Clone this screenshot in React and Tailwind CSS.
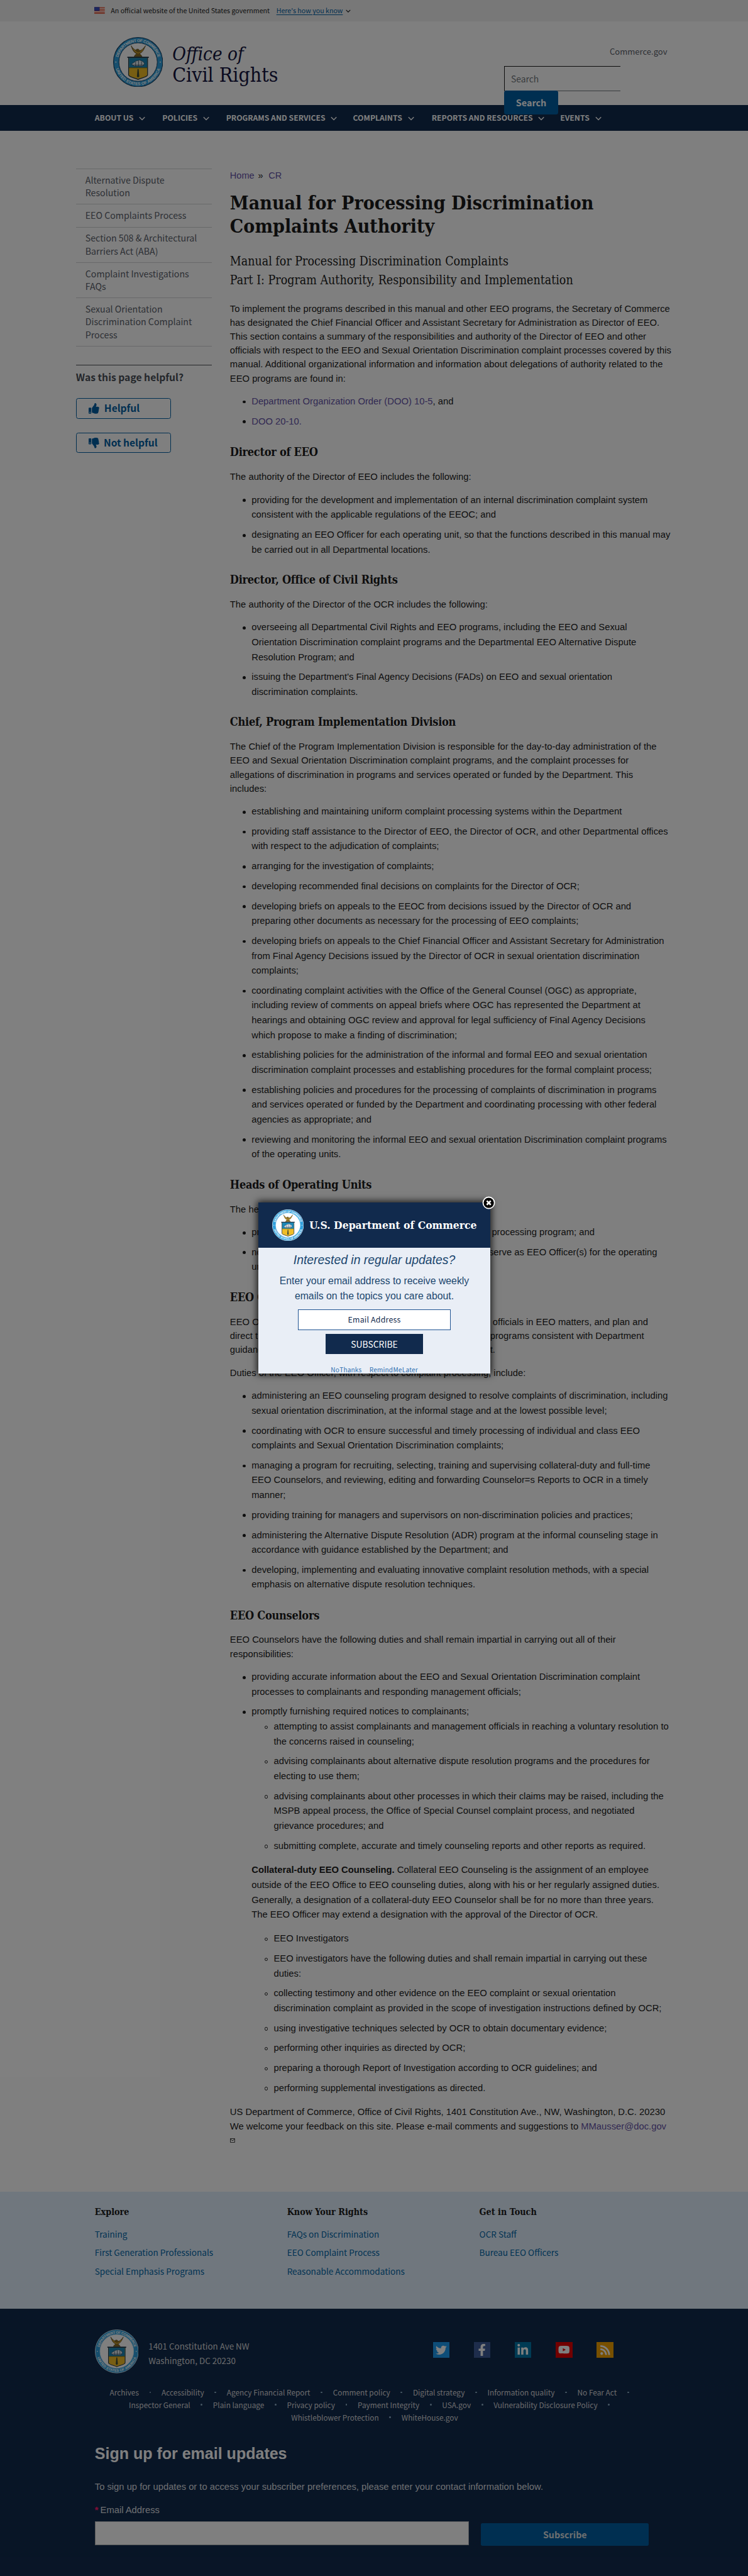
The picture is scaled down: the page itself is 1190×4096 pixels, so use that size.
import React from "react";
import { FaThumbsUp, FaThumbsDown, FaTwitter, FaFacebookF, FaLinkedinIn, FaYoutube, FaRss } from "react-icons/fa";

const MENU = [
  ["About us", "w-[122px]"],
  ["Policies", "w-[115px]"],
  ["Programs and services", "w-[229px]"],
  ["Complaints", "w-[142px]"],
  ["Reports and resources", "w-[232px]"],
  ["Events", "w-[100px]"],
];

const SIDE_LINKS = [
  "Alternative Dispute\nResolution",
  "EEO Complaints Process",
  "Section 508 & Architectural\nBarriers Act (ABA)",
  "Complaint Investigations\nFAQs",
  "Sexual Orientation\nDiscrimination Complaint\nProcess",
];

const FOOTER_COLUMNS = [
  ["Explore", ["Training", "First Generation Professionals", "Special Emphasis Programs"]],
  ["Know Your Rights", ["FAQs on Discrimination", "EEO Complaint Process", "Reasonable Accommodations"]],
  ["Get in Touch", ["OCR Staff", "Bureau EEO Officers"]],
];

const POLICY_ROWS = [
  ["Archives", "Accessibility", "Agency Financial Report", "Comment policy", "Digital strategy", "Information quality", "No Fear Act"],
  ["Inspector General", "Plain language", "Privacy policy", "Payment Integrity", "USA.gov", "Vulnerability Disclosure Policy"],
  ["Whistleblower Protection", "WhiteHouse.gov"],
];

const SOCIAL = [
  [FaTwitter, "bg-[#1c9bf0]", "text-[20px]"],
  [FaFacebookF, "bg-[#3c5a99]", "text-[22px]"],
  [FaLinkedinIn, "bg-[#0077a8]", "text-[22px]"],
  [FaYoutube, "bg-[#e50000]", "text-[21px]"],
  [FaRss, "bg-[#f0a000]", "text-[20px]"],
];

function Seal({ id, className, rim = "#123a5c" }) {
  return (
    <svg viewBox="0 0 100 100" className={className}>
      <defs>
        <path id={`${id}-top`} d="M9.5 50 A40.5 40.5 0 0 1 90.5 50" />
        <path id={`${id}-bottom`} d="M3.5 50 A46.5 46.5 0 0 0 96.5 50" />
      </defs>
      <circle cx="50" cy="50" r="49.3" fill="#2f9fdc" stroke={rim} strokeWidth="1.4" />
      <circle cx="50" cy="50" r="38.5" fill="#fff" stroke={rim} strokeWidth="1.2" />
      <g fill="#fff" fontFamily="'Liberation Sans', sans-serif" fontWeight="700" fontSize="8">
        <text>
          <textPath href={`#${id}-top`} startOffset="50%" textAnchor="middle" textLength="108">DEPARTMENT OF COMMERCE</textPath>
        </text>
        <text>
          <textPath href={`#${id}-bottom`} startOffset="50%" textAnchor="middle" textLength="118">UNITED STATES OF AMERICA</textPath>
        </text>
      </g>
      <circle cx="5.5" cy="50" r="1.2" fill="#fff" />
      <circle cx="94.5" cy="50" r="1.2" fill="#fff" />
      <path d="M36 17 C39 27 42 31 47 33 L44 36 L42 39 L58 39 L56 36 L53 33 C58 31 61 27 65 17 C60 24 56 27 53 27 C52 24 49 23 46 25 L48 27 C43 26 39 22 36 17Z" fill="#8a6d22" stroke="#4e3d13" strokeWidth=".8" />
      <path d="M41 24 C44 30 47 31 50 32 C54 31 58 28 60 24" fill="none" stroke="#d9aa35" strokeWidth="1.6" />
      <path d="M31 41 H69 V76 C69 80 56 82 50 85 C44 82 31 80 31 76Z" fill="#f0bd27" stroke="#263848" strokeWidth="1.6" />
      <path d="M31.8 41.8 H68.2 V61 H31.8Z" fill="#1a86b6" />
      <path d="M28.5 40.5 H71.5" stroke="#1c3245" strokeWidth="2.4" />
      <path d="M37 54 L46 48 L53 46 L60 49 L63 53 L59 58 H42Z" fill="#dfe8ee" stroke="#243a4c" strokeWidth=".8" />
      <path d="M40 56 H61 M45 50 V58 M51 47 V58 M57 49 V57" stroke="#31485a" strokeWidth="1" />
      <path d="M31.5 61.5 H68.5" stroke="#4a5a34" strokeWidth="1.2" />
      <path d="M49 64 H51 L52.4 79 L50 81 L47.6 79Z" fill="#3d4b36" />
    </svg>
  );
}

function Chevron({ className }) {
  return (
    <svg viewBox="0 0 12 8" className={className} fill="none" stroke="currentColor" strokeWidth="1.7">
      <path d="M1 1.2 L6 6.4 L11 1.2" />
    </svg>
  );
}

function Flag() {
  return (
    <svg viewBox="0 0 20 13" className="h-[13px] w-[19px]">
      <rect width="20" height="13" fill="#fff" />
      <path d="M0 1H20M0 4H20M0 7H20M0 10H20M0 12.5H20" stroke="#db3e1f" strokeWidth="1.5" />
      <rect width="10" height="7" fill="#1e33b1" />
      <path d="M1 2H9M1 4.5H9" stroke="#fff" strokeWidth=".7" strokeDasharray="1 1.2" />
    </svg>
  );
}

function Heading({ children }) {
  return (
    <h3 className="mt-[27px] h-[28px] whitespace-pre font-['DejaVu_Serif_Condensed','DejaVu_Serif',serif] text-[20.5px] font-bold leading-[28px] tracking-[-0.32px]">
      {children}
    </h3>
  );
}

function Para({ children }) {
  return <p className="mt-[17.3px] leading-[25.1px]">{children}</p>;
}

function Bullet({ children, hollow }) {
  return (
    <li className="relative">
      <span
        className={
          hollow
            ? "absolute -left-[16.5px] top-[11px] size-[6px] rounded-full border border-[#1b1b1b]"
            : "absolute -left-[16.5px] top-[11px] size-[5.5px] rounded-full bg-[#1b1b1b]"
        }
      />
      {children}
    </li>
  );
}

function List({ items }) {
  return (
    <ul className="mt-[16.2px] flex flex-col gap-[9.2px] pl-[39px] leading-[26.78px]">
      {items.map((item, i) => (
        <Bullet key={i}>{item}</Bullet>
      ))}
    </ul>
  );
}

function Header() {
  return (
    <header className="font-['Noto_Sans_CJK_SC',sans-serif]">
      <div className="flex h-[38px] items-center bg-[#f0f0f0] pl-[170px] text-[12.1px] text-[#1b1b1b]">
        <Flag />
        <span className="ml-[11px] leading-4">An official website of the United States government</span>
        <a className="ml-[12px] leading-4 text-[#005ea2] underline underline-offset-2">Here's how you know</a>
        <Chevron className="ml-[5px] mt-[3px] h-[6px] w-[9px]" />
      </div>
      <div className="relative z-10 flex h-[151px] justify-between pl-[204px] pr-[146px]">
        <div className="flex pt-[29px]">
          <Seal id="seal-head" className="size-[90px]" />
          <div className="ml-[17px] mt-[12px] font-['DejaVu_Serif_Condensed','DejaVu_Serif',serif] leading-[37.5px] text-[#15153f]">
            <div className="whitespace-pre text-[33.4px] italic">Office of</div>
            <div className="whitespace-pre text-[36.1px]">Civil Rights</div>
          </div>
        </div>
        <div className="w-[294px]">
          <div className="mt-[43px] text-right text-[14.8px] leading-6 text-[#5b616b]">Commerce.gov</div>
          <div className="mt-[14px] flex h-[46px] w-[209px] items-center border-b-2 border-l border-t-2 border-b-[#71767a] border-l-[#1b1b1b] border-t-[#1b1b1b] pl-[11px] text-[15.7px] text-[#71767a]">
            Search
          </div>
          <button className="-mt-[2px] flex h-[43px] w-[97px] items-center justify-center rounded-[4px] bg-[#005ea2] pt-[1px] text-[16.3px] font-bold text-white">
            Search
          </button>
        </div>
      </div>
      <nav className="flex h-[47px] items-center bg-[#112a4d] pl-[171px] text-[13.85px] font-bold uppercase text-white">
        {MENU.map(([label, width]) => (
          <div key={label} className={`flex items-center whitespace-nowrap leading-5 ${width}`}>
            {label}
            <Chevron className="ml-[10px] mt-[2px] h-[8px] w-[11.5px]" />
          </div>
        ))}
      </nav>
    </header>
  );
}

function Sidebar() {
  return (
    <aside className="ml-[137px] mt-[68px] w-[245px] font-['Noto_Sans_CJK_SC',sans-serif] text-[#5b616b]">
      <ul className="border-b border-[#d0d2d5]">
        {SIDE_LINKS.map((label) => (
          <li key={label} className="whitespace-pre border-t border-[#d0d2d5] pb-[9.4px] pl-[17px] pt-[7.6px] text-[16.1px] leading-[22.95px]">
            {label}
          </li>
        ))}
      </ul>
      <div className="mt-[33px] border-t border-[#4a4f57] pt-[9px] text-[17.8px] font-bold leading-[26px] text-[#494e57]">
        Was this page helpful?
      </div>
      <div className="mt-[24px] flex flex-col gap-[25px] text-[17.7px] font-bold text-[#005ea2]">
        <button className="flex h-[37px] w-[171px] items-center rounded-[4px] border-2 border-[#005ea2] pl-[22px]">
          <FaThumbsUp className="text-[19px]" />
          <span className="-mt-[2px] ml-[9px]">Helpful</span>
        </button>
        <button className="flex h-[37px] w-[171px] items-center rounded-[4px] border-2 border-[#005ea2] pl-[22px]">
          <FaThumbsDown className="text-[19px]" />
          <span className="-mt-[2px] ml-[8px] whitespace-nowrap">Not helpful</span>
        </button>
      </div>
    </aside>
  );
}

function Article() {
  return (
    <article className="ml-[33px] mt-[68px] whitespace-pre font-['Liberation_Sans',Arial,sans-serif] text-[16.78px] text-[#1b1b1b]">
      <div className="text-[16.5px] leading-[25px]">
        <a className="text-[#6452a6]">Home</a> <span className="ml-[2px]">»</span>
        <a className="ml-[10px] text-[#6452a6]">CR</a>
      </div>
      <h1 className="mt-[16px] font-['DejaVu_Serif_Condensed','DejaVu_Serif',serif] text-[34.1px] font-bold leading-[42px]">
        {"Manual for Processing Discrimination\nComplaints Authority"}
      </h1>
      <h2 className="mt-[25.4px] font-['DejaVu_Serif_Condensed','DejaVu_Serif',serif] text-[22.1px] leading-[35px]">
        {"Manual for Processing Discrimination Complaints\nPart I: Program Authority, Responsibility and Implementation"}
      </h2>
      <p className="mt-[20px] leading-[25.1px]">
        {"To implement the programs described in this manual and other EEO programs, the Secretary of Commerce\nhas designated the Chief Financial Officer and Assistant Secretary for Administration as Director of EEO.\nThis section contains a summary of the responsibilities and authority of the Director of EEO and other\nofficials with respect to the EEO and Sexual Orientation Discrimination complaint processes covered by this\nmanual. Additional organizational information and information about delegations of authority related to the\nEEO programs are found in:"}
      </p>
      <List
        items={[
          <><a className="text-[#6452a6]">Department Organization Order (DOO) 10-5</a>, and</>,
          <a className="text-[#6452a6]">DOO 20-10.</a>,
        ]}
      />

      <div className="h-[1.6px]" />
      <Heading>Director of EEO</Heading>
      <Para>The authority of the Director of EEO includes the following:</Para>
      <List
        items={[
          "providing for the development and implementation of an internal discrimination complaint system\nconsistent with the applicable regulations of the EEOC; and",
          "designating an EEO Officer for each operating unit, so that the functions described in this manual may\nbe carried out in all Departmental locations.",
        ]}
      />

      <Heading>Director, Office of Civil Rights</Heading>
      <Para>The authority of the Director of the OCR includes the following:</Para>
      <List
        items={[
          "overseeing all Departmental Civil Rights and EEO programs, including the EEO and Sexual\nOrientation Discrimination complaint programs and the Departmental EEO Alternative Dispute\nResolution Program; and",
          "issuing the Department's Final Agency Decisions (FADs) on EEO and sexual orientation\ndiscrimination complaints.",
        ]}
      />

      <Heading>Chief, Program Implementation Division</Heading>
      <Para>
        {"The Chief of the Program Implementation Division is responsible for the day-to-day administration of the\nEEO and Sexual Orientation Discrimination complaint programs, and the complaint processes for\nallegations of discrimination in programs and services operated or funded by the Department. This\nincludes:"}
      </Para>
      <List
        items={[
          "establishing and maintaining uniform complaint processing systems within the Department",
          "providing staff assistance to the Director of EEO, the Director of OCR, and other Departmental offices\nwith respect to the adjudication of complaints;",
          "arranging for the investigation of complaints;",
          "developing recommended final decisions on complaints for the Director of OCR;",
          "developing briefs on appeals to the EEOC from decisions issued by the Director of OCR and\npreparing other documents as necessary for the processing of EEO complaints;",
          "developing briefs on appeals to the Chief Financial Officer and Assistant Secretary for Administration\nfrom Final Agency Decisions issued by the Director of OCR in sexual orientation discrimination\ncomplaints;",
          "coordinating complaint activities with the Office of the General Counsel (OGC) as appropriate,\nincluding review of comments on appeal briefs where OGC has represented the Department at\nhearings and obtaining OGC review and approval for legal sufficiency of Final Agency Decisions\nwhich propose to make a finding of discrimination;",
          "establishing policies for the administration of the informal and formal EEO and sexual orientation\ndiscrimination complaint processes and establishing procedures for the formal complaint process;",
          "establishing policies and procedures for the processing of complaints of discrimination in programs\nand services operated or funded by the Department and coordinating processing with other federal\nagencies as appropriate; and",
          "reviewing and monitoring the informal EEO and sexual orientation Discrimination complaint programs\nof the operating units.",
        ]}
      />

      <Heading>Heads of Operating Units</Heading>
      <Para>The heads of operating units are responsible for:</Para>
      <List
        items={[
          <span className="flex justify-between">
            <span>providing resources for the EEO complaint</span>
            <span className="w-[324px]">processing program; and</span>
          </span>,
          <>
            <span className="flex justify-between">
              <span>nominating a qualified employee to</span>
              <span className="w-[329px]">serve as EEO Officer(s) for the operating</span>
            </span>
            unit.
          </>,
        ]}
      />

      <Heading>EEO Officers</Heading>
      <p className="mt-[17.3px] flex justify-between leading-[25.1px]">
        <span>{"EEO Officers advise operating unit\ndirect the EEO complaint\nguidance and requirements"}</span>
        <span className="w-[327px]">{" officials in EEO matters, and plan and\nprograms consistent with Department\nt."}</span>
      </p>
      <p className="mt-[16.7px] leading-[25.1px]">Duties of the EEO Officer, with respect to complaint processing, include:</p>
      <List
        items={[
          "administering an EEO counseling program designed to resolve complaints of discrimination, including\nsexual orientation discrimination, at the informal stage and at the lowest possible level;",
          "coordinating with OCR to ensure successful and timely processing of individual and class EEO\ncomplaints and Sexual Orientation Discrimination complaints;",
          "managing a program for recruiting, selecting, training and supervising collateral-duty and full-time\nEEO Counselors, and reviewing, editing and forwarding Counselor=s Reports to OCR in a timely\nmanner;",
          "providing training for managers and supervisors on non-discrimination policies and practices;",
          "administering the Alternative Dispute Resolution (ADR) program at the informal counseling stage in\naccordance with guidance established by the Department; and",
          "developing, implementing and evaluating innovative complaint resolution methods, with a special\nemphasis on alternative dispute resolution techniques.",
        ]}
      />

      <div className="h-[0.8px]" />
      <Heading>EEO Counselors</Heading>
      <Para>{"EEO Counselors have the following duties and shall remain impartial in carrying out all of their\nresponsibilities:"}</Para>
      <ul className="mt-[16.2px] flex flex-col gap-[9.2px] pl-[39px] leading-[26.78px]">
        <Bullet>{"providing accurate information about the EEO and Sexual Orientation Discrimination complaint\nprocesses to complainants and responding management officials;"}</Bullet>
        <Bullet>
          promptly furnishing required notices to complainants;
          <ul className="flex flex-col gap-[9.2px] pl-[40px]">
            <Bullet hollow>{"attempting to assist complainants and management officials in reaching a voluntary resolution to\nthe concerns raised in counseling;"}</Bullet>
            <Bullet hollow>{"advising complainants about alternative dispute resolution programs and the procedures for\nelecting to use them;"}</Bullet>
            <Bullet hollow>{"advising complainants about other processes in which their claims may be raised, including the\nMSPB appeal process, the Office of Special Counsel complaint process, and negotiated\ngrievance procedures; and"}</Bullet>
            <Bullet hollow>submitting complete, accurate and timely counseling reports and other reports as required.</Bullet>
          </ul>
          <p className="mt-[17.2px]">
            <b>Collateral-duty EEO Counseling.</b>
            {" Collateral EEO Counseling is the assignment of an employee\noutside of the EEO Office to EEO counseling duties, along with his or her regularly assigned duties.\nGenerally, a designation of a collateral-duty EEO Counselor shall be for no more than three years.\nThe EEO Officer may extend a designation with the approval of the Director of OCR."}
          </p>
          <ul className="mt-[16.5px] flex flex-col gap-[9.2px] pl-[40px]">
            <Bullet hollow>EEO Investigators</Bullet>
            <Bullet hollow>{"EEO investigators have the following duties and shall remain impartial in carrying out these\nduties:"}</Bullet>
            <Bullet hollow>{"collecting testimony and other evidence on the EEO complaint or sexual orientation\ndiscrimination complaint as provided in the scope of investigation instructions defined by OCR;"}</Bullet>
            <Bullet hollow>using investigative techniques selected by OCR to obtain documentary evidence;</Bullet>
            <Bullet hollow>performing other inquiries as directed by OCR;</Bullet>
            <Bullet hollow>preparing a thorough Report of Investigation according to OCR guidelines; and</Bullet>
            <Bullet hollow>performing supplemental investigations as directed.</Bullet>
          </ul>
        </Bullet>
      </ul>
      <p className="mt-[16.5px] leading-[26px]">
        {"US Department of Commerce, Office of Civil Rights, 1401 Constitution Ave., NW, Washington, D.C. 20230\nWe welcome your feedback on this site. Please e-mail comments and suggestions to "}
        <a className="text-[#6452a6]">MMausser@doc.gov</a>
      </p>
      <svg viewBox="0 0 10 9" className="mt-[8px] h-[8px] w-[9px]" fill="none" stroke="#333" strokeWidth="1.2">
        <path d="M.6 .6H9.4V8.4H.6Z M.6 1.2L5 5L9.4 1.2" />
      </svg>
    </article>
  );
}

function Footer() {
  return (
    <footer className="font-['Noto_Sans_CJK_SC',sans-serif]">
      <div className="flex h-[211px] bg-[#e1eefc] pl-[171px] pt-[25px]">
        {FOOTER_COLUMNS.map(([title, links]) => (
          <div key={title} className="w-[347px]">
            <h4 className="font-['DejaVu_Serif_Condensed','DejaVu_Serif',serif] text-[16.2px] font-bold leading-6 text-[#1b1b1b]">{title}</h4>
            <ul className="mt-[11px] text-[15.4px] leading-[33.5px] text-[#0067a8]">
              {links.map((link) => (
                <li key={link}>{link}</li>
              ))}
            </ul>
          </div>
        ))}
      </div>
      <div className="h-[485px] bg-[#112a4d] pl-[171px] pt-[38px] text-[#d6d7d9]">
        <div className="flex h-[79px]">
          <Seal id="seal-foot" className="size-[79px]" rim="#cfe6f3" />
          <div className="ml-[18px] mt-[17px] w-[513px] text-[15.2px] leading-[25.5px]">
            <div>1401 Constitution Ave NW</div>
            <div>Washington, DC 20230</div>
          </div>
          <div className="mt-[22px] flex gap-[44px]">
            {SOCIAL.map(([Icon, bg, size], i) => (
              <span key={i} className={`flex h-[29px] w-[30px] items-center justify-center text-white ${bg} ${size}`}>
                <Icon />
              </span>
            ))}
          </div>
        </div>
        <div className="mt-[22.5px] w-[1010px] text-[13.45px] leading-[22.5px]">
          {POLICY_ROWS.map((row, r) => (
            <div key={r} className="flex justify-center">
              {row.map((label, i) => (
                <span key={label} className="flex items-center whitespace-nowrap">
                  {label}
                  {(r < 2 || i === 0) && <i className="mx-[19px] size-[3px] rounded-full bg-[#8fb0c9]" />}
                </span>
              ))}
            </div>
          ))}
        </div>
        <div className="font-['Liberation_Sans',Arial,sans-serif] text-[16.77px] text-white">
          <h2 className="mt-[37px] text-[28.4px] font-bold leading-9">Sign up for email updates</h2>
          <p className="mt-[28.5px] leading-[25px] text-[#dcdee0]">
            To sign up for updates or to access your subscriber preferences, please enter your contact information below.
          </p>
          <div className="mt-[17px] flex leading-[25px] text-[#dcdee0]">
            <span className="w-[10px] font-bold text-[#ff1c6f]">*</span>Email Address
          </div>
          <div className="mt-[8.5px] flex">
            <div className="h-[42px] w-[675px] border border-[#aeb0b5] bg-white" />
            <button className="ml-[22px] mt-[3px] flex h-[41px] w-[303px] items-center justify-center rounded-[3px] bg-[#005ea2] font-['Noto_Sans_CJK_SC',sans-serif] text-[16.2px] font-bold text-[#dcdee0]">
              Subscribe
            </button>
          </div>
        </div>
      </div>
    </footer>
  );
}

function SubscribeModal() {
  return (
    <div className="absolute left-[466px] top-[2169px] w-[419px] font-['Liberation_Sans',Arial,sans-serif] text-[#112a4d] shadow-[0_0_12px_2px_rgba(0,0,0,0.8)]">
      <div className="h-[308px] overflow-hidden bg-[#e9eef6]">
        <div className="flex h-[81px] items-center bg-[#112a4d] pl-[25px]">
          <Seal id="seal-modal" className="size-[57px]" rim="#eaf6fd" />
          <span className="ml-[10px] whitespace-nowrap font-['DejaVu_Serif_Condensed','DejaVu_Serif',serif] text-[19.8px] font-bold text-white">
            U.S. Department of Commerce
          </span>
        </div>
        <div className="flex flex-col items-center whitespace-nowrap text-center text-[#1b466e]">
          <div className="mt-[9px] text-[22px] italic leading-[26px]">Interested in regular updates?</div>
          <div className="mt-[12px] text-[17.95px] leading-[27.3px]">
            Enter your email address to receive weekly
            <br />
            emails on the topics you care about.
          </div>
          <div className="mt-[9.5px] flex h-[38px] w-[275px] items-center justify-center border border-[#205493] bg-white font-['Noto_Sans_CJK_SC',sans-serif] text-[14px] tracking-[0.25px] text-[#112a4d]">
            Email Address
          </div>
          <button className="mt-[7px] flex h-[36px] w-[175px] items-center justify-center bg-[#112a4d] font-['Noto_Sans_CJK_SC',sans-serif] text-[15.8px] text-white">
            SUBSCRIBE
          </button>
          <div className="mt-[22px] flex gap-[14px] font-['Noto_Sans_CJK_SC',sans-serif] text-[11.4px] leading-[14px] tracking-[0.2px] text-[#2e6fb0] [word-spacing:-2.4px]">
            <a>No Thanks</a>
            <a>Remind Me Later</a>
          </div>
        </div>
      </div>
      <svg viewBox="0 0 24 24" className="absolute -right-[9px] -top-[12px] size-[24px]">
        <circle cx="12" cy="12" r="10.3" fill="#000" stroke="#fff" strokeWidth="2" />
        <path d="M8.4 8.4 L15.6 15.6 M15.6 8.4 L8.4 15.6" stroke="#fff" strokeWidth="3" />
      </svg>
    </div>
  );
}

export default function App() {
  return (
    <div className="h-[4096px] w-[1190px] overflow-hidden bg-[#091527]">
      <div className="relative h-[4647px] w-[1350px] overflow-hidden bg-white [zoom:0.8816]">
        <Header />
        <main className="flex h-[3717px] items-start">
          <Sidebar />
          <Article />
        </main>
        <Footer />
        <div className="absolute inset-0 z-20 bg-black/50" />
        <div className="absolute inset-0 z-30">
          <SubscribeModal />
        </div>
      </div>
    </div>
  );
}
